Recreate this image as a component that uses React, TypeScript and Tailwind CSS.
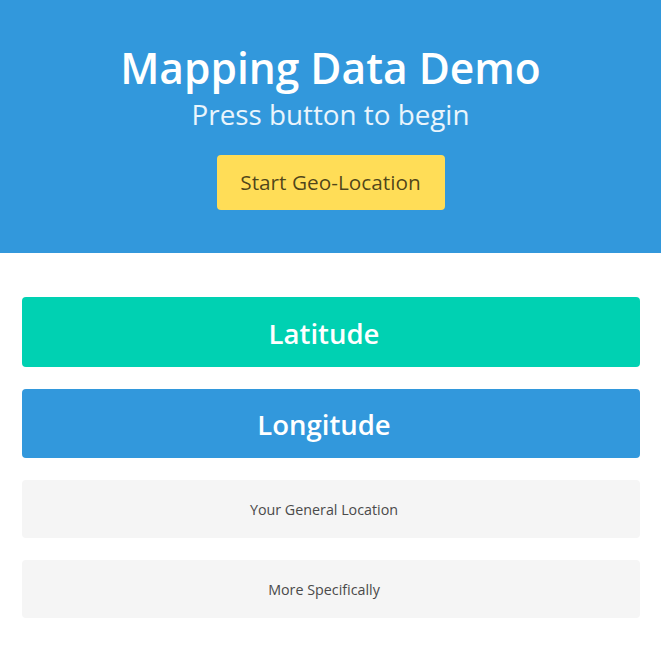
import React from "react";

const font = { fontFamily: '"Open Sans", "Noto Sans", sans-serif' };

const App: React.FC = () => {
  return (
    <div className="min-h-[668px] bg-white" style={font}>
      <section className="bg-[#3298dc] h-[253px] flex flex-col items-center pt-[42px]">
        <h1 className="text-white text-[42.5px] font-semibold leading-[52px]">
          Mapping Data Demo
        </h1>
        <h2 className="text-white/90 text-[27.8px] leading-[36px] mt-[2px]">
          Press button to begin
        </h2>
        <button className="mt-[23px] h-[55px] w-[228px] rounded-[4px] bg-[#ffdd57] text-[20.8px] text-black/70">
          Start Geo-Location
        </button>
      </section>

      <div className="pl-[22px] pr-[21px] pt-[44px] flex flex-col gap-[22px]">
        <div className="h-[70px] rounded-[4px] bg-[#00d1b2] flex items-center justify-center pl-[24px] pr-[38px] pt-[3px] text-white text-[27.5px] font-semibold">
          Latitude
        </div>
        <div className="h-[69px] rounded-[4px] bg-[#3298dc] flex items-center justify-center pl-[24px] pr-[38px] pt-[3px] text-white text-[27.5px] font-semibold">
          Longitude
        </div>
        <div className="h-[58px] rounded-[4px] bg-[#f5f5f5] flex items-center justify-center pl-[24px] pr-[38px] pt-[2px] text-[#4a4a4a] text-[14.3px]">
          Your General Location
        </div>
        <div className="h-[58px] rounded-[4px] bg-[#f5f5f5] flex items-center justify-center pl-[24px] pr-[38px] pt-[2px] text-[#4a4a4a] text-[14.3px]">
          More Specifically
        </div>
      </div>
    </div>
  );
};

export default App;
